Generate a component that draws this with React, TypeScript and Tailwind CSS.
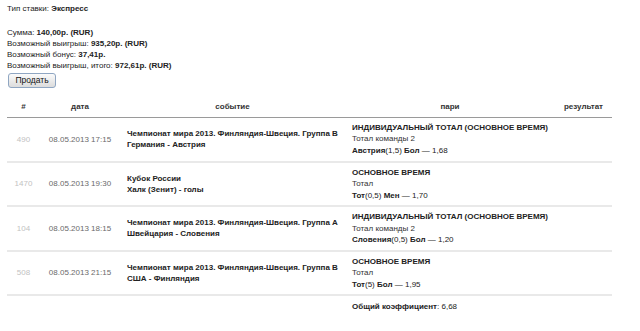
import React from 'react';

type Bet = {
  market: string;
  sub: string;
  pick: string;
  line: string;
  side: string;
  odd: string;
};

type Row = {
  id: string;
  date: string;
  tournament: string;
  match: string;
  bet: Bet;
};

const rows: Row[] = [
  {
    id: '490',
    date: '08.05.2013 17:15',
    tournament: 'Чемпионат мира 2013. Финляндия-Швеция. Группа В',
    match: 'Германия - Австрия',
    bet: { market: 'ИНДИВИДУАЛЬНЫЙ ТОТАЛ (ОСНОВНОЕ ВРЕМЯ)', sub: 'Тотал команды 2', pick: 'Австрия', line: '(1,5)', side: 'Бол', odd: '1,68' },
  },
  {
    id: '1470',
    date: '08.05.2013 19:30',
    tournament: 'Кубок России',
    match: 'Халк (Зенит) - голы',
    bet: { market: 'ОСНОВНОЕ ВРЕМЯ', sub: 'Тотал', pick: 'Тот', line: '(0,5)', side: 'Мен', odd: '1,70' },
  },
  {
    id: '104',
    date: '08.05.2013 18:15',
    tournament: 'Чемпионат мира 2013. Финляндия-Швеция. Группа А',
    match: 'Швейцария - Словения',
    bet: { market: 'ИНДИВИДУАЛЬНЫЙ ТОТАЛ (ОСНОВНОЕ ВРЕМЯ)', sub: 'Тотал команды 2', pick: 'Словения', line: '(0,5)', side: 'Бол', odd: '1,20' },
  },
  {
    id: '508',
    date: '08.05.2013 21:15',
    tournament: 'Чемпионат мира 2013. Финляндия-Швеция. Группа В',
    match: 'США - Финляндия',
    bet: { market: 'ОСНОВНОЕ ВРЕМЯ', sub: 'Тотал', pick: 'Тот', line: '(5)', side: 'Бол', odd: '1,95' },
  },
];

export default function App() {
  return (
    <div className="w-[640px] h-[331px] bg-white text-[#222] text-[8px] leading-[11px] px-[7px] pt-[3px] overflow-hidden" style={{ fontFamily: '"Liberation Sans", Arial, sans-serif' }}>
      {/* ── Summary ─────────────────────────────────────────────── */}
      <div>
        Тип ставки: <b>Экспресс</b>
      </div>
      <div className="mt-[13px]">
        <div>Сумма: <b>140,00р. (RUR)</b></div>
        <div>Возможный выигрыш: <b>935,20р. (RUR)</b></div>
        <div>Возможный бонус: <b>37,41р.</b></div>
        <div>Возможный выигрыш, итого: <b>972,61р. (RUR)</b></div>
      </div>
      <button className="mt-[2px] ml-px h-[15px] w-[48px] rounded-[3px] border border-[#8fa6c2] bg-gradient-to-b from-[#fbfbfb] to-[#dcdcdc] text-[8.5px] leading-[13px] text-[#111] flex items-center justify-center">
        Продать
      </button>

      {/* ── Bets table ──────────────────────────────────────────── */}
      <table className="mt-[11px] w-[605px] border-collapse table-fixed">
        <colgroup>
          <col className="w-[33px]" />
          <col className="w-[80px]" />
          <col className="w-[225px]" />
          <col className="w-[210px]" />
          <col className="w-[57px]" />
        </colgroup>
        <thead>
          <tr className="border-b border-[#9a9a9a] font-bold text-[#333]">
            <th className="h-[18px] pb-[2px] text-center">#</th>
            <th className="pb-[2px] text-center">дата</th>
            <th className="pb-[2px] text-center">событие</th>
            <th className="pb-[2px] text-center">пари</th>
            <th className="pb-[2px] text-center">результат</th>
          </tr>
        </thead>
        <tbody>
          {rows.map((r) => (
            <tr key={r.id} className="border-b-2 border-[#e9e9e9]">
              <td className="h-[44.5px] text-center text-[#c2c2c2] align-middle">{r.id}</td>
              <td className="text-center text-[#6a6a6a] align-middle whitespace-nowrap">{r.date}</td>
              <td className="pl-[7px] align-middle font-bold leading-[11px] whitespace-nowrap">
                <div>{r.tournament}</div>
                <div>{r.match}</div>
              </td>
              <td className="pl-[7px] align-middle leading-[11.5px] whitespace-nowrap">
                <div className="font-bold">{r.bet.market}</div>
                <div className="text-[#333]">{r.bet.sub}</div>
                <div>
                  <b>{r.bet.pick}</b>
                  {r.bet.line} <b>{r.bet.side}</b> — {r.bet.odd}
                </div>
              </td>
              <td />
            </tr>
          ))}
          <tr>
            <td colSpan={3} />
            <td className="pl-[7px] h-[22px] align-middle">
              <b>Общий коэффициент</b>: 6,68
            </td>
            <td />
          </tr>
        </tbody>
      </table>
    </div>
  );
}
